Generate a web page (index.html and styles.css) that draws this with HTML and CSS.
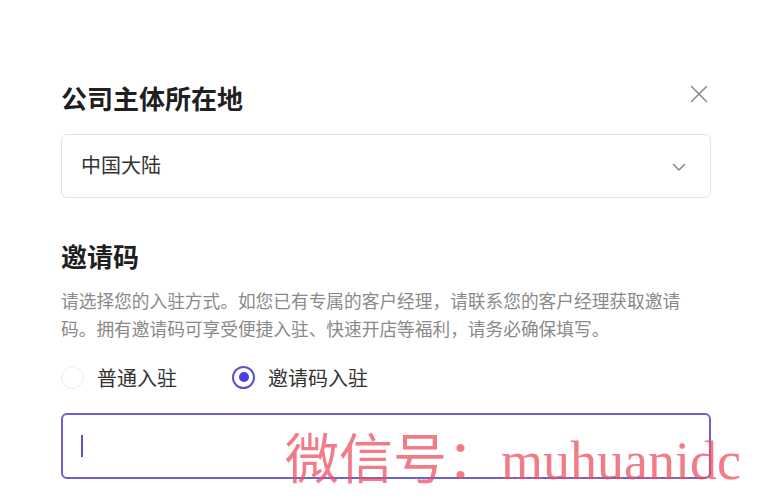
FILE: index.html
```html
<!DOCTYPE html>
<html lang="zh-CN">
<head>
<meta charset="utf-8">
<title>公司主体所在地</title>
<link rel="stylesheet" href="styles.css">
</head>
<body>
<div class="panel">
  <div class="header">
    <h2 class="title">公司主体所在地</h2>
    <svg class="close" width="18" height="18" viewBox="0 0 18 18" aria-hidden="true">
      <path d="M1.5 1.5 L16.5 16.5 M16.5 1.5 L1.5 16.5" stroke="#8a8a92" stroke-width="1.6" stroke-linecap="round" fill="none"/>
    </svg>
  </div>
  <div class="select">
    <span class="select-value">中国大陆</span>
    <svg class="chevron" width="14" height="9" viewBox="0 0 14 9" aria-hidden="true">
      <path d="M1.5 1.5 L7 7 L12.5 1.5" stroke="#8a8a8a" stroke-width="1.6" stroke-linecap="round" stroke-linejoin="round" fill="none"/>
    </svg>
  </div>
  <h2 class="title section-title">邀请码</h2>
  <p class="desc">请选择您的入驻方式。如您已有专属的客户经理，请联系您的客户经理获取邀请码。拥有邀请码可享受便捷入驻、快速开店等福利，请务必确保填写。</p>
  <div class="radios">
    <label class="radio"><span class="dot"></span><span class="radio-text">普通入驻</span></label>
    <label class="radio checked"><span class="dot"></span><span class="radio-text">邀请码入驻</span></label>
  </div>
  <div class="input"><span class="caret"></span></div>
</div>
<div class="watermark">微信号：muhuanidc</div>
</body>
</html>
```
FILE: styles.css
```css
* { box-sizing: border-box; }
html, body {
  margin: 0;
  padding: 0;
  background: #ffffff;
}
body {
  width: 758px;
  height: 500px;
  overflow: hidden;
  position: relative;
  font-family: "Noto Sans CJK SC", "Noto Sans", sans-serif;
  color: #2b2b2b;
}
.panel {
  padding: 80px 47px 0 61px;
}
.header {
  display: flex;
  align-items: center;
  justify-content: space-between;
  height: 36px;
}
.title {
  margin: 0;
  font-size: 26px;
  line-height: 36px;
  font-weight: 600;
  color: #1f1f1f;
}
.close {
  margin-right: 3px;
  margin-top: -8px;
}
.select {
  margin-top: 18px;
  height: 64px;
  border: 1.5px solid #e3e3e3;
  border-radius: 6px;
  display: flex;
  align-items: center;
  justify-content: space-between;
  padding: 0 24px 3px 19px;
}
.select-value {
  font-size: 20px;
  color: #333333;
}
.chevron {
  margin-top: 5px;
}
.section-title {
  margin-top: 40px;
}
.desc {
  margin: 12px 0 0 0;
  max-width: 630px;
  font-size: 17.7px;
  line-height: 28px;
  color: #8a8a8a;
}
.radios {
  margin-top: 21px;
  height: 28px;
  display: flex;
  align-items: center;
  gap: 55px;
}
.radio {
  display: flex;
  align-items: center;
  gap: 13px;
}
.dot {
  width: 23px;
  height: 23px;
  border-radius: 50%;
  border: 1.5px solid #ececec;
  display: flex;
  align-items: center;
  justify-content: center;
}
.radio.checked .dot {
  border: 2px solid #5a50d6;
}
.radio.checked .dot::after {
  content: "";
  width: 10px;
  height: 10px;
  border-radius: 50%;
  background: #4a3fe2;
}
.radio-text {
  font-size: 20px;
  color: #333333;
}
.input {
  margin-top: 22px;
  height: 66px;
  border: 2px solid #6a62d0;
  border-radius: 6px;
  display: flex;
  align-items: center;
  padding-left: 18px;
}
.caret {
  width: 2px;
  height: 22px;
  background: #5b52c8;
}
.watermark {
  position: absolute;
  left: 285px;
  top: 434px;
  font-family: "Liberation Serif", "Noto Sans CJK SC", serif;
  font-size: 54px;
  line-height: 1;
  color: rgba(236, 80, 96, 0.75);
  white-space: nowrap;
}
```
